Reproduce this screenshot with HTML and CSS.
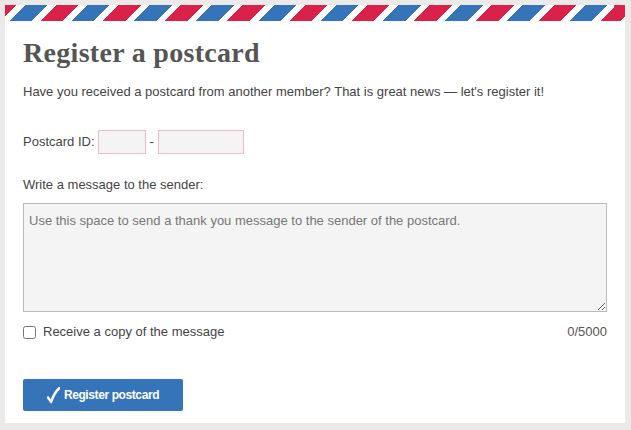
FILE: index.html
```html
<!DOCTYPE html>
<html lang="en">
<head>
    <meta charset="UTF-8">
    <meta name="viewport" content="width=device-width, initial-scale=1.0">
    <title>Register a postcard</title>
    <link rel="stylesheet" href="styles.css">
</head>
<body>
    <div class="card">
        <div class="airmail"></div>
        <div class="content">
            <h1>Register a postcard</h1>
            <p class="intro">Have you received a postcard from another member? That is great news &mdash; let's register it!</p>

            <div class="id-row">
                <label for="idPrefix">Postcard ID:</label>
                <input type="text" id="idPrefix" class="id-prefix">
                <span class="dash">-</span>
                <input type="text" id="idNumber" class="id-number">
            </div>

            <label class="message-label" for="message">Write a message to the sender:</label>
            <textarea id="message" placeholder="Use this space to send a thank you message to the sender of the postcard."></textarea>

            <div class="options">
                <label class="copy"><input type="checkbox"> Receive a copy of the message</label>
                <span class="counter">0/5000</span>
            </div>

            <button class="register-button">
                <svg width="13" height="17" viewBox="0 0 13 17"><path d="M1 10.5 L4.2 15 C6 9 8.5 4.5 12.5 1" fill="none" stroke="#fff" stroke-width="2.4" stroke-linecap="round" stroke-linejoin="round"/></svg>
                Register postcard
            </button>
        </div>
    </div>
</body>
</html>
```

FILE: styles.css
```css
body {
    margin: 0;
    padding: 5px 6px 7px 5px;
    background-color: #ebeae8;
    font-family: "Liberation Sans", Arial, sans-serif;
    color: #444;
}

.card {
    background: #fff;
    height: 418px;
}

.airmail {
    height: 16px;
    background: repeating-linear-gradient(
        135deg,
        #d9214a 0,
        #d9214a 16px,
        #fff 16px,
        #fff 22px,
        #3574b8 22px,
        #3574b8 38px,
        #fff 38px,
        #fff 44px
    );
    background-position: -11px 0;
}

.content {
    padding: 0 18px;
}

h1 {
    margin: 16px 0 0;
    font-family: "Liberation Serif", Georgia, serif;
    font-size: 28px;
    line-height: 32px;
    font-weight: bold;
    letter-spacing: 0.3px;
    color: #555;
}

.intro {
    margin: 13px 0 0;
    font-size: 13px;
    line-height: 20px;
}

.id-row {
    display: flex;
    align-items: center;
    margin-top: 28px;
    font-size: 13px;
    line-height: 20px;
}

.id-row label {
    margin-right: 3px;
}

.id-row input {
    box-sizing: border-box;
    height: 24px;
    border: 1px solid #f5b8c4;
    background: #f4f4f4;
    padding: 0 4px;
    font: inherit;
}

.id-prefix {
    width: 48px;
}

.id-number {
    width: 86px;
}

.dash {
    margin: 0 4px;
}

.message-label {
    display: block;
    margin-top: 21px;
    font-size: 13px;
    line-height: 20px;
}

textarea {
    display: block;
    box-sizing: border-box;
    width: 584px;
    height: 109px;
    margin-top: 8px;
    padding: 7px 5px;
    border: 1px solid #bbb;
    background: #f4f4f4;
    font-family: "Liberation Sans", Arial, sans-serif;
    font-size: 13px;
    line-height: 20px;
    color: #444;
}

textarea::placeholder {
    color: #777;
}

.options {
    display: flex;
    justify-content: space-between;
    align-items: center;
    width: 584px;
    margin-top: 10px;
    font-size: 13px;
    line-height: 20px;
}

.copy {
    display: flex;
    align-items: center;
}

.copy input {
    margin: 0 7px 0 0;
    width: 13px;
    height: 13px;
}

.counter {
    color: #555;
}

.register-button {
    display: flex;
    align-items: center;
    justify-content: center;
    gap: 4px;
    width: 160px;
    height: 32px;
    margin-top: 37px;
    border: none;
    border-radius: 2px;
    background-color: #3574b8;
    color: #fff;
    font-family: "Liberation Sans", Arial, sans-serif;
    font-size: 12px;
    font-weight: bold;
    letter-spacing: -0.4px;
    cursor: pointer;
}
```
